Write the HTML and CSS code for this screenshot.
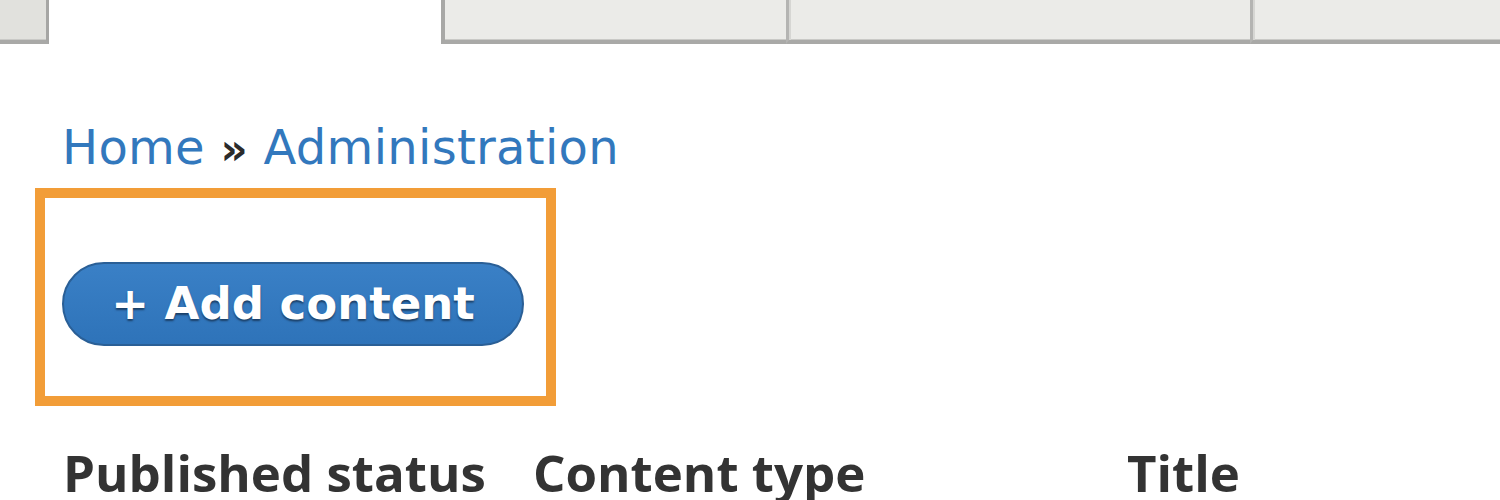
FILE: index.html
```html
<!DOCTYPE html>
<html>
<head>
<meta charset="utf-8">
<link rel="stylesheet" href="styles.css">
</head>
<body>
<div class="tabs">
  <div class="tab tab-first"></div>
  <div class="tab tab-active"></div>
  <div class="tab tab-2"></div>
  <div class="tab tab-3"></div>
  <div class="tab tab-4"></div>
</div>
<div class="content">
  <div class="breadcrumb"><a href="#">Home</a> <span class="sep">»</span> <a href="#">Administration</a></div>
  <div class="highlight">
    <a class="button" href="#">+ Add content</a>
  </div>
  <div class="headers">
    <div class="th">Published status</div>
    <div class="th">Content type</div>
    <div class="th">Title</div>
  </div>
</div>
</body>
</html>
```
FILE: styles.css
```css
html, body {
  margin: 0;
  padding: 0;
  background: #ffffff;
  overflow: hidden;
}
body {
  width: 1500px;
  height: 500px;
  font-family: "DejaVu Sans", "Open Sans", sans-serif;
}
.tabs {
  display: flex;
  height: 44px;
}
.tab {
  box-sizing: border-box;
  height: 44px;
  background: #ebebe8;
  border-bottom: 4px solid #a9a9a7;
  box-shadow: inset 0 -1px 0 #c9c9c6;
}
.tab-first {
  width: 49px;
  background: #e1e1dd;
  border-right: 3px solid #a6a6a4;
}
.tab-active {
  width: 392px;
  background: #ffffff;
  border-bottom: none;
  box-shadow: none;
}
.tab-2 {
  width: 345px;
  border-left: 4px solid #a8a8a6;
}
.tab-3 {
  width: 464px;
  border-left: 3px solid #b4b4b2;
  box-shadow: inset 2px 0 0 #d6d6d3, inset 0 -1px 0 #c9c9c6;
}
.tab-4 {
  flex: 1;
  border-left: 3px solid #b4b4b2;
  box-shadow: inset 2px 0 0 #d6d6d3, inset 0 -1px 0 #c9c9c6;
}
.content {
  padding-top: 70px;
}
.breadcrumb {
  padding-left: 62px;
  font-size: 48px;
  line-height: 66px;
  color: #333;
  letter-spacing: 0.3px;
}
.breadcrumb a {
  color: #3278bd;
  text-decoration: none;
}
.breadcrumb .sep {
  color: #2b2b2b;
  font-weight: bold;
  font-size: 42px;
}
.highlight {
  box-sizing: border-box;
  margin-left: 35px;
  margin-top: 5px;
  width: 521px;
  height: 218px;
  border: 10px solid #f29d38;
  padding: 64px 0 0 17px;
}
.button {
  display: inline-flex;
  align-items: center;
  justify-content: center;
  box-sizing: border-box;
  width: 462px;
  height: 84px;
  border-radius: 42px;
  background: linear-gradient(#3a80c6, #2e73b9);
  border: 2px solid #2a5f96;
  color: #ffffff;
  font-family: "DejaVu Sans", sans-serif;
  font-weight: bold;
  font-size: 45px;
  text-decoration: none;
  text-shadow: 0 2px 2px #1b3f66;
  padding-bottom: 2px;
}
.headers {
  display: grid;
  grid-template-columns: 470px 594px 1fr;
  padding-left: 63px;
  margin-top: 36px;
}
.th {
  font-family: "Open Sans", sans-serif;
  font-weight: bold;
  font-size: 51px;
  line-height: 60px;
  color: #333333;
  white-space: nowrap;
}
```
